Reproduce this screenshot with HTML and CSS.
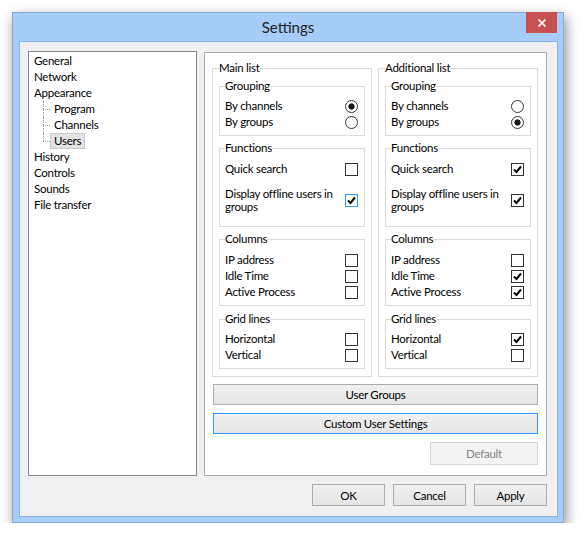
FILE: index.html
```html
<!DOCTYPE html>
<html lang="en">
<head>
    <meta charset="UTF-8">
    <title>Settings</title>
    <link rel="stylesheet" href="styles.css">
</head>
<body>

    <div class="window">
        <div class="titlebar">
            <span class="title">Settings</span>
            <button class="close" aria-label="Close">
                <svg width="10" height="10" viewBox="0 0 10 10"><path d="M1.5 1.5L8.5 8.5M8.5 1.5L1.5 8.5" stroke="#fff" stroke-width="1.7"/></svg>
            </button>
        </div>

        <div class="client">
            <div class="main">
                <!-- Category tree -->
                <ul class="tree">
                    <li><span class="node">General</span></li>
                    <li><span class="node">Network</span></li>
                    <li><span class="node">Appearance</span>
                        <ul class="children">
                            <li><span class="node">Program</span></li>
                            <li><span class="node">Channels</span></li>
                            <li><span class="node selected">Users</span></li>
                        </ul>
                    </li>
                    <li><span class="node">History</span></li>
                    <li><span class="node">Controls</span></li>
                    <li><span class="node">Sounds</span></li>
                    <li><span class="node">File transfer</span></li>
                </ul>

                <!-- Users page -->
                <div class="page">
                    <div class="lists">
                        <fieldset class="list">
                            <legend>Main list</legend>
                            <fieldset class="group grouping">
                                <legend>Grouping</legend>
                                <div class="opt"><span>By channels</span><span class="radio on"></span></div>
                                <div class="opt"><span>By groups</span><span class="radio"></span></div>
                            </fieldset>
                            <fieldset class="group functions">
                                <legend>Functions</legend>
                                <div class="opt"><span>Quick search</span><span class="check"></span></div>
                                <div class="opt multi"><span>Display offline users in<br>groups</span><span class="check on hover"><svg viewBox="0 0 11 11"><path d="M2 5.5L4.5 8L9 2.5"/></svg></span></div>
                            </fieldset>
                            <fieldset class="group columns">
                                <legend>Columns</legend>
                                <div class="opt"><span>IP address</span><span class="check"></span></div>
                                <div class="opt"><span>Idle Time</span><span class="check"></span></div>
                                <div class="opt"><span>Active Process</span><span class="check"></span></div>
                            </fieldset>
                            <fieldset class="group gridlines">
                                <legend>Grid lines</legend>
                                <div class="opt"><span>Horizontal</span><span class="check"></span></div>
                                <div class="opt"><span>Vertical</span><span class="check"></span></div>
                            </fieldset>
                        </fieldset>

                        <fieldset class="list">
                            <legend>Additional list</legend>
                            <fieldset class="group grouping">
                                <legend>Grouping</legend>
                                <div class="opt"><span>By channels</span><span class="radio"></span></div>
                                <div class="opt"><span>By groups</span><span class="radio on"></span></div>
                            </fieldset>
                            <fieldset class="group functions">
                                <legend>Functions</legend>
                                <div class="opt"><span>Quick search</span><span class="check on"><svg viewBox="0 0 11 11"><path d="M2 5.5L4.5 8L9 2.5"/></svg></span></div>
                                <div class="opt multi"><span>Display offline users in<br>groups</span><span class="check on"><svg viewBox="0 0 11 11"><path d="M2 5.5L4.5 8L9 2.5"/></svg></span></div>
                            </fieldset>
                            <fieldset class="group columns">
                                <legend>Columns</legend>
                                <div class="opt"><span>IP address</span><span class="check"></span></div>
                                <div class="opt"><span>Idle Time</span><span class="check on"><svg viewBox="0 0 11 11"><path d="M2 5.5L4.5 8L9 2.5"/></svg></span></div>
                                <div class="opt"><span>Active Process</span><span class="check on"><svg viewBox="0 0 11 11"><path d="M2 5.5L4.5 8L9 2.5"/></svg></span></div>
                            </fieldset>
                            <fieldset class="group gridlines">
                                <legend>Grid lines</legend>
                                <div class="opt"><span>Horizontal</span><span class="check on"><svg viewBox="0 0 11 11"><path d="M2 5.5L4.5 8L9 2.5"/></svg></span></div>
                                <div class="opt"><span>Vertical</span><span class="check"></span></div>
                            </fieldset>
                        </fieldset>
                    </div>

                    <button class="btn wide">User Groups</button>
                    <button class="btn wide focused">Custom User Settings</button>
                    <div class="page-actions">
                        <button class="btn default-btn" disabled>Default</button>
                    </div>
                </div>
            </div>

            <div class="footer">
                <button class="btn">OK</button>
                <button class="btn">Cancel</button>
                <button class="btn">Apply</button>
            </div>
        </div>
    </div>

</body>
</html>
```

FILE: styles.css
```css
body {
    margin: 0;
    padding: 12px 0 0 12px;
    background: #fff;
    font-family: Lato, "Noto Sans", sans-serif;
    font-size: 11.5px;
    letter-spacing: -0.25px;
    color: #000;
}
.window {
    box-sizing: border-box;
    width: 552px;
    height: 511px;
    border: 1px solid #86aad8;
    background: #a5cdf7;
    display: flex;
    flex-direction: column;
    box-shadow: 2px 5px 12px rgba(0, 0, 0, 0.45);
}
.titlebar {
    position: relative;
    height: 28px;
    line-height: 28px;
    text-align: center;
}
.title {
    font-size: 15px;
    letter-spacing: 0;
    color: #222;
}
.close {
    position: absolute;
    top: -1px;
    right: 6px;
    width: 31px;
    height: 21px;
    padding: 0;
    border: none;
    background: #c75050;
    display: flex;
    align-items: center;
    justify-content: center;
}
.client {
    flex: 1;
    margin: 0 5px 5px 6px;
    border: 1px solid #8db2df;
    background: #f0f0f0;
    padding: 9px 10px 10px 8px;
    display: flex;
    flex-direction: column;
}
.main {
    display: flex;
    gap: 7px;
    height: 425px;
}

/* tree */
.tree {
    box-sizing: border-box;
    width: 169px;
    margin: 0;
    padding: 1px 0 0 1px;
    list-style: none;
    line-height: 16px;
    background: #fff;
    border: 1px solid #828790;
}
.tree li {
    position: relative;
}
.node {
    display: inline-block;
    vertical-align: top;
    line-height: 14px;
    padding: 0 3px;
    border: 1px solid transparent;
}
.node.selected {
    background: #e3e3e3;
    border-color: #c9c9c9;
}
.children {
    list-style: none;
    margin: 0;
    padding: 0;
}
.children li {
    padding-left: 20px;
}
.children li::before {
    content: "";
    position: absolute;
    left: 13px;
    top: 8px;
    width: 7px;
    border-top: 1px dotted #9a9a9a;
}
.children li::after {
    content: "";
    position: absolute;
    left: 13px;
    top: 0;
    height: 16px;
    border-left: 1px dotted #9a9a9a;
}
.children li:last-child::after {
    height: 8px;
}

/* page */
.page {
    flex: 1;
    background: #fff;
    border: 1px solid #adadad;
    margin-top: 1px;
    padding: 7px 7px 10px 7px;
    display: flex;
    flex-direction: column;
}
.lists {
    display: flex;
    gap: 6px;
}
fieldset {
    margin: 0;
    min-width: 0;
    border: 1px solid #dcdcdc;
}
legend {
    padding: 0;
    line-height: 16px;
}
.list {
    box-sizing: border-box;
    width: 160px;
    padding: 2px 6px 7px 6px;
}
.group {
    padding: 4px 6px 5px 5px;
    margin-top: 4px;
}
.group:first-of-type {
    margin-top: 0;
}
.functions {
    padding-top: 5px;
    padding-bottom: 13px;
}
.columns {
    padding-top: 5px;
}
.gridlines {
    margin-top: 5px;
}
.opt {
    display: flex;
    justify-content: space-between;
    align-items: center;
    line-height: 16px;
}
.opt.multi {
    margin-top: 10px;
    line-height: 13px;
}
.check, .radio {
    box-sizing: border-box;
    width: 13px;
    height: 13px;
    border: 1px solid #333;
    background: #fff;
    flex-shrink: 0;
}
.check svg {
    display: block;
    width: 11px;
    height: 11px;
    fill: none;
    stroke: #000;
    stroke-width: 2;
}
.check.hover {
    border-color: #3399ff;
}
.radio {
    border-radius: 50%;
}
.radio.on {
    background: radial-gradient(circle, #1a1a1a 2.8px, #fff 3.4px);
}

/* buttons */
.btn {
    box-sizing: border-box;
    font-family: inherit;
    font-size: 11.5px;
    letter-spacing: inherit;
    color: #000;
    background: linear-gradient(#f0f0f0, #e5e5e5);
    border: 1px solid #acacac;
    padding: 0;
}
.wide {
    height: 21px;
    margin: 7px 1px 0 1px;
}
.wide + .wide {
    margin-top: 8px;
}
.focused {
    border-color: #3399ff;
}
.page-actions {
    display: flex;
    justify-content: flex-end;
    margin-top: 8px;
}
.default-btn {
    width: 108px;
    height: 23px;
    margin-right: 1px;
    background: #f4f4f4;
    border-color: #d5d5d5;
    color: #838383;
}
.footer {
    display: flex;
    justify-content: flex-end;
    gap: 8px;
    margin-top: 8px;
}
.footer .btn {
    width: 73px;
    height: 22px;
}
```
